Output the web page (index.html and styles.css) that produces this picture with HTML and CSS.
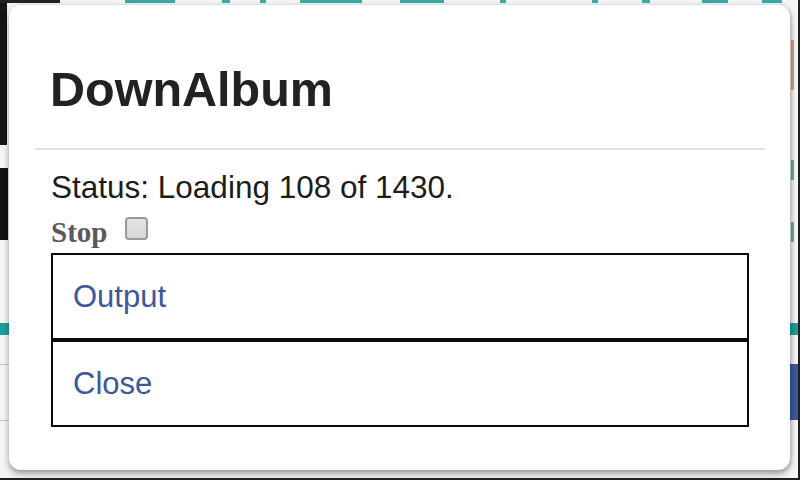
FILE: index.html
```html
<!DOCTYPE html>
<html lang="en">
<head>
<meta charset="utf-8">
<title>DownAlbum</title>
<link rel="stylesheet" href="styles.css">
</head>
<body>
  <div class="shot">
    <div class="page-behind"></div>
    <div class="dialog">
      <div class="dialog-header">
        <h1 class="dialog-title">DownAlbum</h1>
      </div>
      <div class="dialog-body">
        <div class="status">Status: Loading 108 of 1430.</div>
        <label class="stop-row">
          <span class="stop-label">Stop</span>
          <input type="checkbox" class="stop-box">
        </label>
        <div class="actions">
          <a class="action" href="#">Output</a>
          <a class="action" href="#">Close</a>
        </div>
      </div>
    </div>
  </div>
</body>
</html>
```

FILE: styles.css
```css
html, body {
  margin: 0;
  padding: 0;
  background: #ffffff;
}

body {
  width: 804px;
  height: 482px;
  overflow: hidden;
  font-family: "Liberation Sans", Arial, sans-serif;
}

/* framed capture with a dark edge on the right and bottom */
.shot {
  position: relative;
  width: 798px;
  height: 478px;
  border-right: 2px solid #1e1e1e;
  border-bottom: 2px solid #1e1e1e;
  background: #f3f3f3;
  overflow: hidden;
}

/* faded page peeking out around the dialog */
.page-behind {
  position: absolute;
  inset: 0;
  background:
    /* top row of teal marks */
    linear-gradient(#3aaaa6, #3aaaa6) 125px 0 / 50px 3px no-repeat,
    linear-gradient(#3aaaa6, #3aaaa6) 222px 0 / 8px 3px no-repeat,
    linear-gradient(#3aaaa6, #3aaaa6) 260px 0 / 6px 3px no-repeat,
    linear-gradient(#3aaaa6, #3aaaa6) 300px 0 / 62px 3px no-repeat,
    linear-gradient(#3aaaa6, #3aaaa6) 400px 0 / 44px 3px no-repeat,
    linear-gradient(#3aaaa6, #3aaaa6) 500px 0 / 6px 3px no-repeat,
    linear-gradient(#3aaaa6, #3aaaa6) 592px 0 / 6px 3px no-repeat,
    linear-gradient(#3aaaa6, #3aaaa6) 642px 0 / 8px 3px no-repeat,
    linear-gradient(#3aaaa6, #3aaaa6) 702px 0 / 26px 3px no-repeat,
    linear-gradient(#3aaaa6, #3aaaa6) 762px 0 / 20px 3px no-repeat,
    linear-gradient(#222, #222) 0 0 / 60px 3px no-repeat,
    /* left edge */
    linear-gradient(#151515, #151515) 0 0 / 7px 145px no-repeat,
    linear-gradient(#151515, #151515) 0 168px / 8px 72px no-repeat,
    linear-gradient(#1d9e9a, #1d9e9a) 0 323px / 9px 12px no-repeat,
    linear-gradient(#c8c8c8, #c8c8c8) 0 364px / 9px 1px no-repeat,
    linear-gradient(#c8c8c8, #c8c8c8) 0 420px / 9px 1px no-repeat,
    /* right edge */
    linear-gradient(#d2a486, #d2a486) 791px 40px / 3px 50px no-repeat,
    linear-gradient(#5fb0aa, #5fb0aa) 791px 160px / 3px 20px no-repeat,
    linear-gradient(#5fb0aa, #5fb0aa) 791px 222px / 3px 20px no-repeat,
    linear-gradient(#1d9e9a, #1d9e9a) 790px 323px / 8px 12px no-repeat,
    linear-gradient(#3b5998, #3b5998) 790px 364px / 8px 56px no-repeat,
    #f4f4f4;
}

.dialog {
  position: absolute;
  left: 9px;
  top: 5px;
  width: 781px;
  height: 465px;
  box-sizing: border-box;
  padding: 0 25px 0 26px;
  background: #ffffff;
  border-radius: 12px;
  box-shadow: 0 4px 6px rgba(0, 0, 0, 0.35), 2px 0 4px rgba(0, 0, 0, 0.12);
}

.dialog-header {
  padding: 56px 0 31px 15px;
  border-bottom: 2px solid #e2e2e2;
}

.dialog-title {
  margin: 0;
  font-size: 48.5px;
  line-height: 56px;
  font-weight: bold;
  color: #222222;
}

.dialog-body {
  padding: 19px 0 0 16px;
}

.status {
  font-size: 31.5px;
  line-height: 36px;
  color: #1c1c1c;
}

.stop-row {
  display: flex;
  align-items: flex-start;
  gap: 18px;
  margin-top: 12px;
  height: 36px;
}

.stop-label {
  font-family: "Liberation Serif", "Times New Roman", serif;
  font-weight: bold;
  font-size: 29px;
  line-height: 31px;
  color: #5a5a5a;
}

.stop-box {
  appearance: none;
  -webkit-appearance: none;
  margin: 0;
  width: 23px;
  height: 23px;
  box-sizing: border-box;
  border: 2px solid #9a9a9a;
  border-radius: 4px;
  background: linear-gradient(#e4e4e4, #d6d6d6);
}

.actions {
  display: flex;
  flex-direction: column;
  width: 698px;
}

.action {
  display: flex;
  align-items: center;
  height: 87px;
  box-sizing: border-box;
  padding-left: 20px;
  border: 2px solid #0a0a0a;
  font-size: 31px;
  color: #3b5998;
  text-decoration: none;
}
```
